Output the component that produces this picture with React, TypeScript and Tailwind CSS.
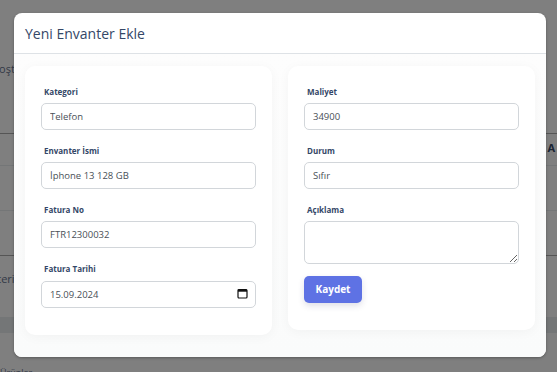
import React from 'react';

const font = { fontFamily: '"Open Sans", "Noto Sans", sans-serif' };

function Field({ label, children }: { label: string; children: React.ReactNode }) {
  return (
    <div className="flex flex-col">
      <label className="mb-[5px] ml-[3px] text-[8px] leading-[12px] font-bold text-[#344767]">{label}</label>
      {children}
    </div>
  );
}

const inputCls =
  'h-[27px] w-full rounded-[5px] border border-[#d2d6da] bg-white px-[8px] text-[9.5px] text-[#495057] outline-none';

export default function App() {
  return (
    <div className="relative h-[372px] w-[557px] overflow-hidden bg-white" style={font}>
      {/* page behind the modal */}
      <div className="flex flex-col text-[11px] text-[#344767]">
        <div className="h-[60px]" />
        <div className="-ml-[8px] h-[18px] leading-[18px] text-[#67748e]">Boşta</div>
        <div className="h-[55px]" />
        <div className="flex h-[32px] justify-end border-t border-[#aaa] pr-[2px] text-[11px] font-bold leading-[28px]">A</div>
        <div className="h-[45px] border-t border-[#e9ecef]" />
        <div className="h-[45px] border-t border-[#e9ecef]" />
        <div className="-ml-[34px] h-[62px] border-t border-[#aaa] leading-[46px] text-[#67748e]">Envanteri</div>
        <div className="h-[16px] bg-[#e9ecef]" />
        <div className="h-[34px]" />
        <div className="text-[9px] leading-[12px] text-[#67748e]">Ürünler</div>
      </div>

      {/* overlay */}
      <div className="absolute inset-0 bg-black/50" />

      {/* modal */}
      <div className="absolute left-[14px] top-[13px] flex w-[532px] flex-col rounded-[8px] bg-white shadow-[0_1px_3px_rgba(0,0,0,0.3)]">
        <div className="flex h-[41px] items-center border-b border-[#dee2e6] px-[11px]">
          <h5 className="text-[14px] font-medium text-[#344767]">Yeni Envanter Ekle</h5>
        </div>
        <div className="flex items-start gap-[16px] rounded-b-[8px] bg-gradient-to-b from-[#fdfdfd] to-[#fafbfb] px-[11px] pb-[22px] pt-[12px]">
          <div className="flex flex-1 flex-col gap-[15px] rounded-[10px] bg-white px-[16px] pb-[27px] pt-[20px] shadow-[0_2px_12px_rgba(0,0,0,0.04)]">
            <Field label="Kategori">
              <input className={inputCls} defaultValue="Telefon" />
            </Field>
            <Field label="Envanter İsmi">
              <input className={inputCls} defaultValue="İphone 13 128 GB" />
            </Field>
            <Field label="Fatura No">
              <input className={inputCls} defaultValue="FTR12300032" />
            </Field>
            <Field label="Fatura Tarihi">
              <div className="relative">
                <input className={inputCls} defaultValue="15.09.2024" />
                <svg
                  className="absolute right-[8px] top-[8px]"
                  width="11"
                  height="11"
                  viewBox="0 0 11 11"
                  fill="none"
                  stroke="#111"
                >
                  <rect x="1" y="1.5" width="9" height="8.5" rx="1" strokeWidth="1.2" />
                  <rect x="1" y="1.5" width="9" height="2.2" fill="#111" stroke="none" />
                </svg>
              </div>
            </Field>
          </div>
          <div className="flex flex-1 flex-col gap-[15px] rounded-[10px] bg-white px-[16px] pb-[27px] pt-[20px] shadow-[0_2px_12px_rgba(0,0,0,0.04)]">
            <Field label="Maliyet">
              <input className={inputCls} defaultValue="34900" />
            </Field>
            <Field label="Durum">
              <input className={inputCls} defaultValue="Sıfır" />
            </Field>
            <Field label="Açıklama">
              <textarea className="block h-[43px] w-full rounded-[5px] border border-[#d2d6da] bg-white px-[8px] text-[9.5px] text-[#495057] outline-none" />
            </Field>
            <div className="-mt-[3px] flex">
              <button className="h-[27px] w-[58px] rounded-[5px] bg-[#5e72e4] text-[10px] font-bold text-white shadow-[0_3px_6px_rgba(50,50,93,0.15)]">
                Kaydet
              </button>
            </div>
          </div>
        </div>
      </div>
    </div>
  );
}
